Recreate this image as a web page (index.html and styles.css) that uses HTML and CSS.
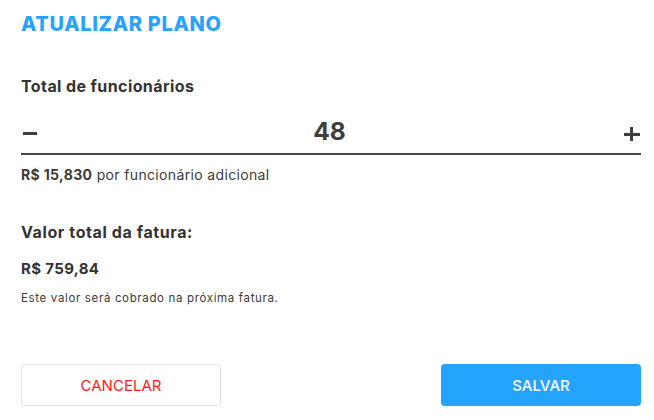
FILE: index.html
```html
<!DOCTYPE html>
<html lang="pt-BR">
<head>
<meta charset="utf-8">
<title>Atualizar plano</title>
<link rel="stylesheet" href="styles.css">
</head>
<body>
<main class="dialog">
  <h1 class="title">ATUALIZAR PLANO</h1>
  <h2 class="label">Total de funcionários</h2>
  <div class="stepper">
    <button class="step step-minus" aria-label="Diminuir"><span class="bar-h"></span></button>
    <span class="count">48</span>
    <button class="step step-plus" aria-label="Aumentar"><span class="bar-h"></span><span class="bar-v"></span></button>
  </div>
  <p class="unit"><strong>R$ 15,830</strong> por funcionário adicional</p>
  <h2 class="label total-label">Valor total da fatura:</h2>
  <p class="total">R$ 759,84</p>
  <p class="note">Este valor será cobrado na próxima fatura.</p>
  <div class="actions">
    <button class="btn btn-cancel">CANCELAR</button>
    <button class="btn btn-save">SALVAR</button>
  </div>
</main>
</body>
</html>
```
FILE: styles.css
```css
* { box-sizing: border-box; }
html, body { margin: 0; padding: 0; background: #fff; }
body { font-family: "Inter", "Noto Sans", sans-serif; color: #3b3b3b; }
.dialog { width: 654px; padding: 12px 13px 0 21px; }
.title { margin: 0; font-size: 20px; line-height: 24px; font-weight: 800; color: #28a2fc; letter-spacing: 0.65px; }
.label { margin: 40px 0 0; font-size: 16px; line-height: 20px; font-weight: 700; color: #333; letter-spacing: 0.4px; }
.stepper { display: flex; align-items: center; justify-content: space-between; height: 46px; margin-top: 13px; border-bottom: 2.5px solid #474747; }
.step { position: relative; border: 0; background: none; padding: 0; width: 16px; height: 16px; cursor: pointer; }
.step-minus { margin-left: 1px; margin-top: 5px; }
.step-plus { margin-right: 1px; margin-top: 6px; }
.bar-h { position: absolute; left: 0; right: 0; top: 50%; height: 3px; margin-top: -1.5px; background: #3e3e3e; }
.bar-v { position: absolute; top: 1px; bottom: 1px; left: 50%; width: 3px; margin-left: -1.5px; background: #3e3e3e; }
.step-minus .bar-h { left: 1px; right: 1px; }
.count { font-size: 24.5px; font-weight: 700; color: #3d3d3d; line-height: 30px; margin-left: -3px; margin-top: 0; }
.unit { margin: 11px 0 0; font-size: 14px; line-height: 18px; color: #3b3b3b; letter-spacing: 0.35px; }
.unit strong { font-weight: 700; }
.total-label { margin-top: 38px; font-size: 16px; letter-spacing: 0.6px; }
.total { margin: 17px 0 0; font-size: 15px; line-height: 20px; font-weight: 700; color: #333; letter-spacing: 0.35px; }
.note { margin: 12px 0 0; font-size: 11.5px; line-height: 14px; color: #3b3b3b; letter-spacing: 0.65px; }
.actions { display: flex; justify-content: space-between; margin-top: 59px; }
.btn { width: 200px; height: 42px; border-radius: 4px; font-family: "Inter", "Roboto", sans-serif; font-size: 15px; cursor: pointer; }
.btn-cancel { background: #fff; border: 1px solid #e2e2e2; color: #ff1a1a; }
.btn-save { background: #24a3ff; border: 0; color: #fff; font-weight: 500; }
```
